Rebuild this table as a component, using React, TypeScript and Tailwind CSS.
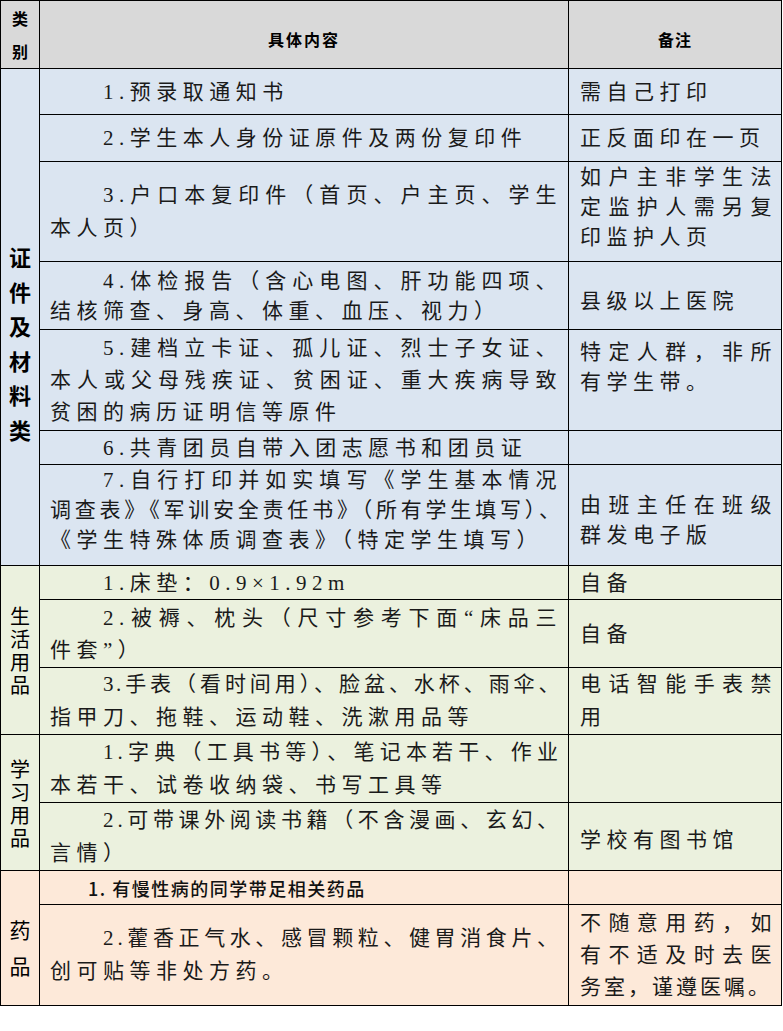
import React from 'react';

type L = string | { t: string; c: string };
type C = { lines: L[]; c?: string };
type R = { h: string; main: C; note: C; plain?: string };
type G = { label: string; labelCls: string; bg: string; rows: R[] };

const serif = "font-['Liberation_Serif','Noto_Sans_CJK_SC',serif]";
const sans = "font-['Noto_Sans_CJK_SC',sans-serif]";

const groups: G[] = [
  {
    label: '证件及材料类',
    labelCls: 'align-top pt-[170px] text-[22px] font-bold leading-[34.5px]',
    bg: 'bg-[#dbe5f1]',
    rows: [
      { h: 'h-[46px]', main: { lines: ['1.预录取通知书'] }, note: { lines: ['需自己打印'] } },
      { h: 'h-[47px]', main: { lines: ['2.学生本人身份证原件及两份复印件'] }, note: { lines: ['正反面印在一页'] } },
      {
        h: 'h-[100px]',
        main: { lines: ['3.户口本复印件（首页、户主页、学生', '本人页）'], c: 'leading-[33px]' },
        note: { lines: ['如户主非学生法', '定监护人需另复', '印监护人页'], c: 'align-top leading-[25px]' },
      },
      {
        h: 'h-[68px]',
        main: { lines: ['4.体检报告（含心电图、肝功能四项、', '结核筛查、身高、体重、血压、视力）'], c: 'leading-[27px]' },
        note: { lines: ['县级以上医院'], c: 'pt-[10px]' },
      },
      {
        h: 'h-[101px]',
        main: {
          lines: ['5.建档立卡证、孤儿证、烈士子女证、', '本人或父母残疾证、贫困证、重大疾病导致', '贫困的病历证明信等原件'],
          c: 'leading-[32px]',
        },
        note: { lines: ['特定人群，非所', '有学生带。'], c: 'align-top pt-[7px] leading-[30px]' },
      },
      { h: 'h-[34px]', main: { lines: ['6.共青团员自带入团志愿书和团员证'] }, note: { lines: [] } },
      {
        h: 'h-[101px]',
        main: {
          lines: [
            '7.自行打印并如实填写《学生基本情况',
            { t: '调查表》《军训安全责任书》（所有学生填写）、', c: 'tracking-[2px]' },
            '《学生特殊体质调查表》（特定学生填写）',
          ],
          c: 'leading-[29px] pb-[10px]',
        },
        note: { lines: ['由班主任在班级', '群发电子版'], c: 'leading-[28px] pt-[9px]' },
      },
    ],
  },
  {
    label: '生活用品',
    labelCls: 'align-middle text-[20px] leading-[23px]',
    bg: 'bg-[#ebf1de]',
    rows: [
      { h: 'h-[34px]', main: { lines: ['1.床垫：0.9×1.92m'] }, note: { lines: ['自备'] } },
      {
        h: 'h-[68px]',
        main: { lines: ['2.被褥、枕头（尺寸参考下面“床品三', '件套”）'], c: 'leading-[32px]' },
        note: { lines: ['自备'] },
      },
      {
        h: 'h-[67px]',
        main: {
          lines: [{ t: '3.手表（看时间用）、脸盆、水杯、雨伞、', c: 'tracking-[2.5px]' }, '指甲刀、拖鞋、运动鞋、洗漱用品等'],
          c: 'leading-[33px]',
        },
        note: { lines: ['电话智能手表禁', '用'], c: 'leading-[33px]' },
      },
    ],
  },
  {
    label: '学习用品',
    labelCls: 'align-middle text-[20px] leading-[23px]',
    bg: 'bg-[#ebf1de]',
    rows: [
      {
        h: 'h-[68px]',
        main: {
          lines: [{ t: '1.字典（工具书等）、笔记本若干、作业', c: 'tracking-[4px]' }, '本若干、试卷收纳袋、书写工具等'],
          c: 'leading-[33px]',
        },
        note: { lines: [] },
      },
      {
        h: 'h-[68px]',
        main: {
          lines: [{ t: '2.可带课外阅读书籍（不含漫画、玄幻、', c: 'tracking-[4px]' }, '言情）'],
          c: 'leading-[33px]',
        },
        note: { lines: ['学校有图书馆'], c: 'pt-[6px]' },
      },
    ],
  },
  {
    label: '药品',
    labelCls: 'align-middle pt-[18px] text-[21px] leading-[36px]',
    bg: 'bg-[#fde9d9]',
    rows: [
      { h: 'h-[34px]', main: { lines: [] }, note: { lines: [] }, plain: '1. 有慢性病的同学带足相关药品' },
      {
        h: 'h-[101px]',
        main: {
          lines: [{ t: '2.藿香正气水、感冒颗粒、健胃消食片、', c: 'tracking-[4px]' }, '创可贴等非处方药。'],
          c: 'leading-[33px]',
        },
        note: {
          lines: ['不随意用药，如', '有不适及时去医', { t: '务室，谨遵医嘱。', c: 'tracking-[3px]' }],
          c: 'leading-[32px]',
        },
      },
    ],
  },
];

function Lines({ lines, indent }: { lines: L[]; indent: boolean }) {
  return (
    <>
      {lines.map((l, i) => {
        const t = typeof l === 'string' ? l : l.t;
        const extra = typeof l === 'string' ? '' : l.c;
        const justify = i < lines.length - 1 ? 'text-justify [text-align-last:justify]' : '';
        const pad = indent && i === 0 ? 'pl-[53px]' : '';
        return (
          <div key={i} className={`${justify} ${pad} ${extra}`}>
            {t}
          </div>
        );
      })}
    </>
  );
}

export default function App() {
  return (
    <div lang="zh-CN" className="bg-white min-h-screen text-black">
      <table className="w-[782px] table-fixed border-collapse border border-black">
        <colgroup>
          <col className="w-[39px]" />
          <col className="w-[529px]" />
          <col />
        </colgroup>
        <thead>
          <tr className="h-[68px] bg-[#d9d9d9]">
            <th className={`border border-black align-middle p-0 text-[16px] font-bold leading-[33px] ${sans}`}>
              <div>类</div>
              <div>别</div>
            </th>
            <th className={`border border-black align-middle pt-[8px] text-[16px] font-bold tracking-[2px] ${sans}`}>
              具体内容
            </th>
            <th className={`border border-black align-middle pt-[8px] text-[16px] font-bold tracking-[1px] ${sans}`}>
              备注
            </th>
          </tr>
        </thead>
        <tbody>
          {groups.map((g) =>
            g.rows.map((r, i) => (
              <tr key={g.label + i} className={`${r.h} ${g.bg}`}>
                {i === 0 && (
                  <td rowSpan={g.rows.length} className={`border border-black p-0 text-center ${sans} ${g.labelCls}`}>
                    {g.label.split('').map((ch, k) => (
                      <div key={k}>{ch}</div>
                    ))}
                  </td>
                )}
                {r.plain ? (
                  <td className={`border border-black align-middle pl-[48px] text-[18px] leading-[28px] tracking-[1.5px] font-medium text-[#111] ${sans}`}>
                    {r.plain}
                  </td>
                ) : (
                  <td
                    className={`border border-black align-middle pl-[10px] pr-[6px] text-[21px] leading-[30px] tracking-[5.5px] text-[#1a1a1a] ${serif} ${r.main.c ?? ''}`}
                  >
                    <Lines lines={r.main.lines} indent />
                  </td>
                )}
                <td
                  className={`border border-black align-middle pl-[11px] pr-[4px] text-[21px] leading-[30px] tracking-[5.5px] text-[#1a1a1a] ${serif} ${r.note.c ?? ''}`}
                >
                  <Lines lines={r.note.lines} indent={false} />
                </td>
              </tr>
            ))
          )}
        </tbody>
      </table>
    </div>
  );
}
